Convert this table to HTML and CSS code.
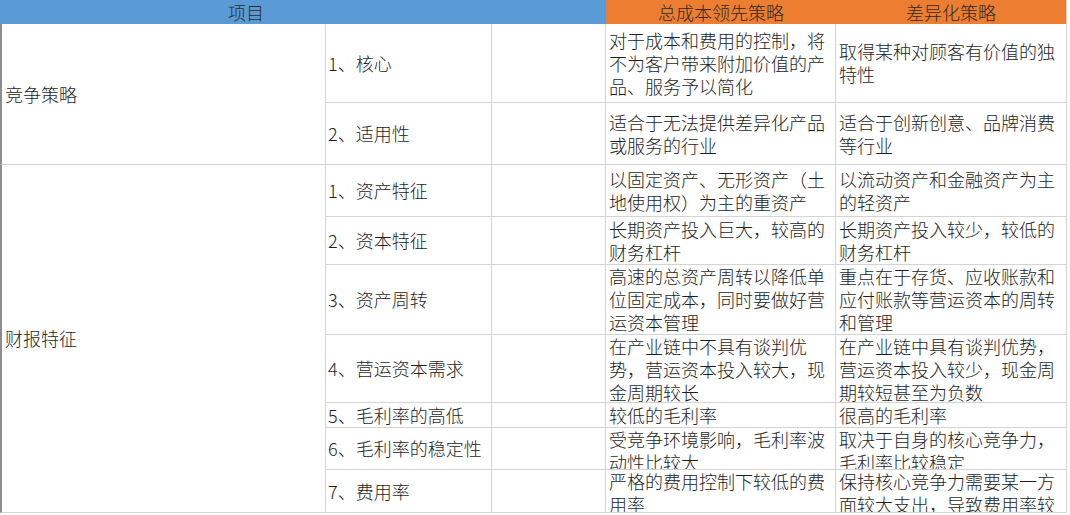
FILE: index.html
```html
<!DOCTYPE html>
<html lang="zh-CN">
<head>
<meta charset="utf-8">
<title>竞争策略与财报特征</title>
<link rel="stylesheet" href="styles.css">
</head>
<body>
<div class="sheet">
  <div class="hd hd-blue hd-item">项目</div>
  <div class="hd hd-blue"></div>
  <div class="hd hd-orange">总成本领先策略</div>
  <div class="hd hd-orange hd-last">差异化策略</div>

  <div class="c a span-2">竞争策略</div>
  <div class="c b">1、核心</div><div class="c e0"></div>
  <div class="c d">对于成本和费用的控制，将不为客户带来附加价值的产品、服务予以简化</div>
  <div class="c d">取得某种对顾客有价值的独特性</div>

  <div class="c b">2、适用性</div><div class="c e0"></div>
  <div class="c d">适合于无法提供差异化产品或服务的行业</div>
  <div class="c d">适合于创新创意、品牌消费等行业</div>

  <div class="c a span-7">财报特征</div>
  <div class="c b">1、资产特征</div><div class="c e0"></div>
  <div class="c d">以固定资产、无形资产（土地使用权）为主的重资产</div>
  <div class="c d">以流动资产和金融资产为主的轻资产</div>

  <div class="c b">2、资本特征</div><div class="c e0"></div>
  <div class="c d">长期资产投入巨大，较高的财务杠杆</div>
  <div class="c d">长期资产投入较少，较低的财务杠杆</div>

  <div class="c b">3、资产周转</div><div class="c e0"></div>
  <div class="c d">高速的总资产周转以降低单位固定成本，同时要做好营运资本管理</div>
  <div class="c d">重点在于存货、应收账款和应付账款等营运资本的周转和管理</div>

  <div class="c b">4、营运资本需求</div><div class="c e0"></div>
  <div class="c d">在产业链中不具有谈判优势，营运资本投入较大，现金周期较长</div>
  <div class="c d">在产业链中具有谈判优势，营运资本投入较少，现金周期较短甚至为负数</div>

  <div class="c b">5、毛利率的高低</div><div class="c e0"></div>
  <div class="c d">较低的毛利率</div>
  <div class="c d">很高的毛利率</div>

  <div class="c b">6、毛利率的稳定性</div><div class="c e0"></div>
  <div class="c d">受竞争环境影响，毛利率波动性比较大</div>
  <div class="c d">取决于自身的核心竞争力，毛利率比较稳定</div>

  <div class="c b">7、费用率</div><div class="c e0"></div>
  <div class="c d">严格的费用控制下较低的费用率</div>
  <div class="c d">保持核心竞争力需要某一方面较大支出，导致费用率较高</div>
</div>
</body>
</html>
```

FILE: styles.css
```css
html, body {
  margin: 0;
  padding: 0;
  background: #ffffff;
}

body {
  font-family: "Noto Sans CJK SC", "Noto Sans", sans-serif;
  font-size: 18px;
  font-weight: 300;
  line-height: 23px;
  color: #1e1e1e;
}

.sheet {
  display: grid;
  grid-template-columns: 326px 166px 114px 230px 231px;
  grid-template-rows: 24px 79px 62px 52px 48px 70px 68px 25px 42px 43px;
  width: 1067px;
}

.hd {
  display: flex;
  align-items: center;
  justify-content: center;
  overflow: hidden;
  color: #2b2b2b;
}

.hd-item {
  grid-column: span 2;
}

.hd-blue {
  background: #5b9bd5;
}

.hd-orange {
  background: #ed7d31;
}

.hd-last {
  border-right: 1px solid #d0d0d0;
}

.c {
  box-sizing: border-box;
  display: flex;
  align-items: safe center;
  overflow: hidden;
  border-right: 1px solid #d4d4d4;
  border-bottom: 1px solid #d4d4d4;
  padding-left: 3px;
}

.a {
  border-left: 2px solid #8c8c8c;
  padding-left: 3px;
}

.span-2 {
  grid-row: span 2;
}

.span-7 {
  grid-row: span 7;
}

.b {
  padding-left: 2px;
}

.d {
  padding-left: 3px;
  padding-right: 2px;
}
```
